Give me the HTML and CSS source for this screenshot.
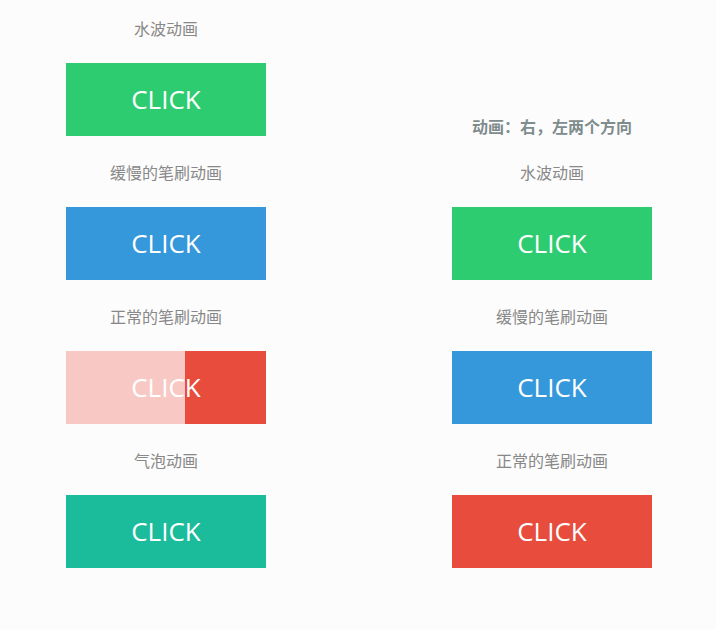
FILE: index.html
```html
<!DOCTYPE html>
<html lang="zh-CN">
<head>
  <meta charset="UTF-8">
  <meta name="viewport" content="width=device-width, initial-scale=1.0">
  <title>按钮动画</title>
  <link rel="stylesheet" href="styles.css">
</head>
<body>

  <div class="wrap">
    <div class="column">
      <div class="item">
        <div class="label">水波动画</div>
        <div class="btn green">CLICK</div>
      </div>
      <div class="item">
        <div class="label">缓慢的笔刷动画</div>
        <div class="btn blue">CLICK</div>
      </div>
      <div class="item">
        <div class="label">正常的笔刷动画</div>
        <div class="btn brush">
          <span class="fill"></span>
          <span class="text">CLICK</span>
        </div>
      </div>
      <div class="item">
        <div class="label">气泡动画</div>
        <div class="btn teal">CLICK</div>
      </div>
    </div>

    <div class="column">
      <div class="title">动画：右，左两个方向</div>
      <div class="item">
        <div class="label">水波动画</div>
        <div class="btn green">CLICK</div>
      </div>
      <div class="item">
        <div class="label">缓慢的笔刷动画</div>
        <div class="btn blue">CLICK</div>
      </div>
      <div class="item">
        <div class="label">正常的笔刷动画</div>
        <div class="btn red">CLICK</div>
      </div>
    </div>
  </div>

</body>
</html>
```

FILE: styles.css
```css
* {
  margin: 0;
  padding: 0;
  box-sizing: border-box;
}

body {
  font-family: "Open Sans", "Noto Sans CJK SC", sans-serif;
  background-color: #fcfcfc;
  color: #888;
}

.wrap {
  display: flex;
  gap: 186px;
  padding-left: 66px;
}

.column {
  width: 200px;
  text-align: center;
}

.title {
  font-family: "Noto Sans CJK SC", sans-serif;
  font-size: 16px;
  font-weight: bold;
  line-height: 22px;
  color: #7f8c8d;
  padding-top: 115px;
  padding-bottom: 7px;
}

.item {
  padding-top: 18px;
  padding-bottom: 8px;
}

.label {
  font-family: "Noto Sans CJK SC", sans-serif;
  font-size: 16px;
  line-height: 20px;
  margin-bottom: 25px;
}

.btn {
  position: relative;
  height: 73px;
  line-height: 73px;
  font-size: 26px;
  color: #fff;
  overflow: hidden;
  cursor: pointer;
}

.green {
  background: #2ecc71;
}

.blue {
  background: #3498db;
}

.teal {
  background: #1abc9c;
}

.red {
  background: #e74c3c;
}

/* half-way frame of the brush animation */
.brush {
  background: #f8c9c4;
}

.brush .fill {
  position: absolute;
  top: 0;
  right: 0;
  bottom: 0;
  width: 81px;
  background: #e74c3c;
}

.brush .text {
  position: relative;
}
```
